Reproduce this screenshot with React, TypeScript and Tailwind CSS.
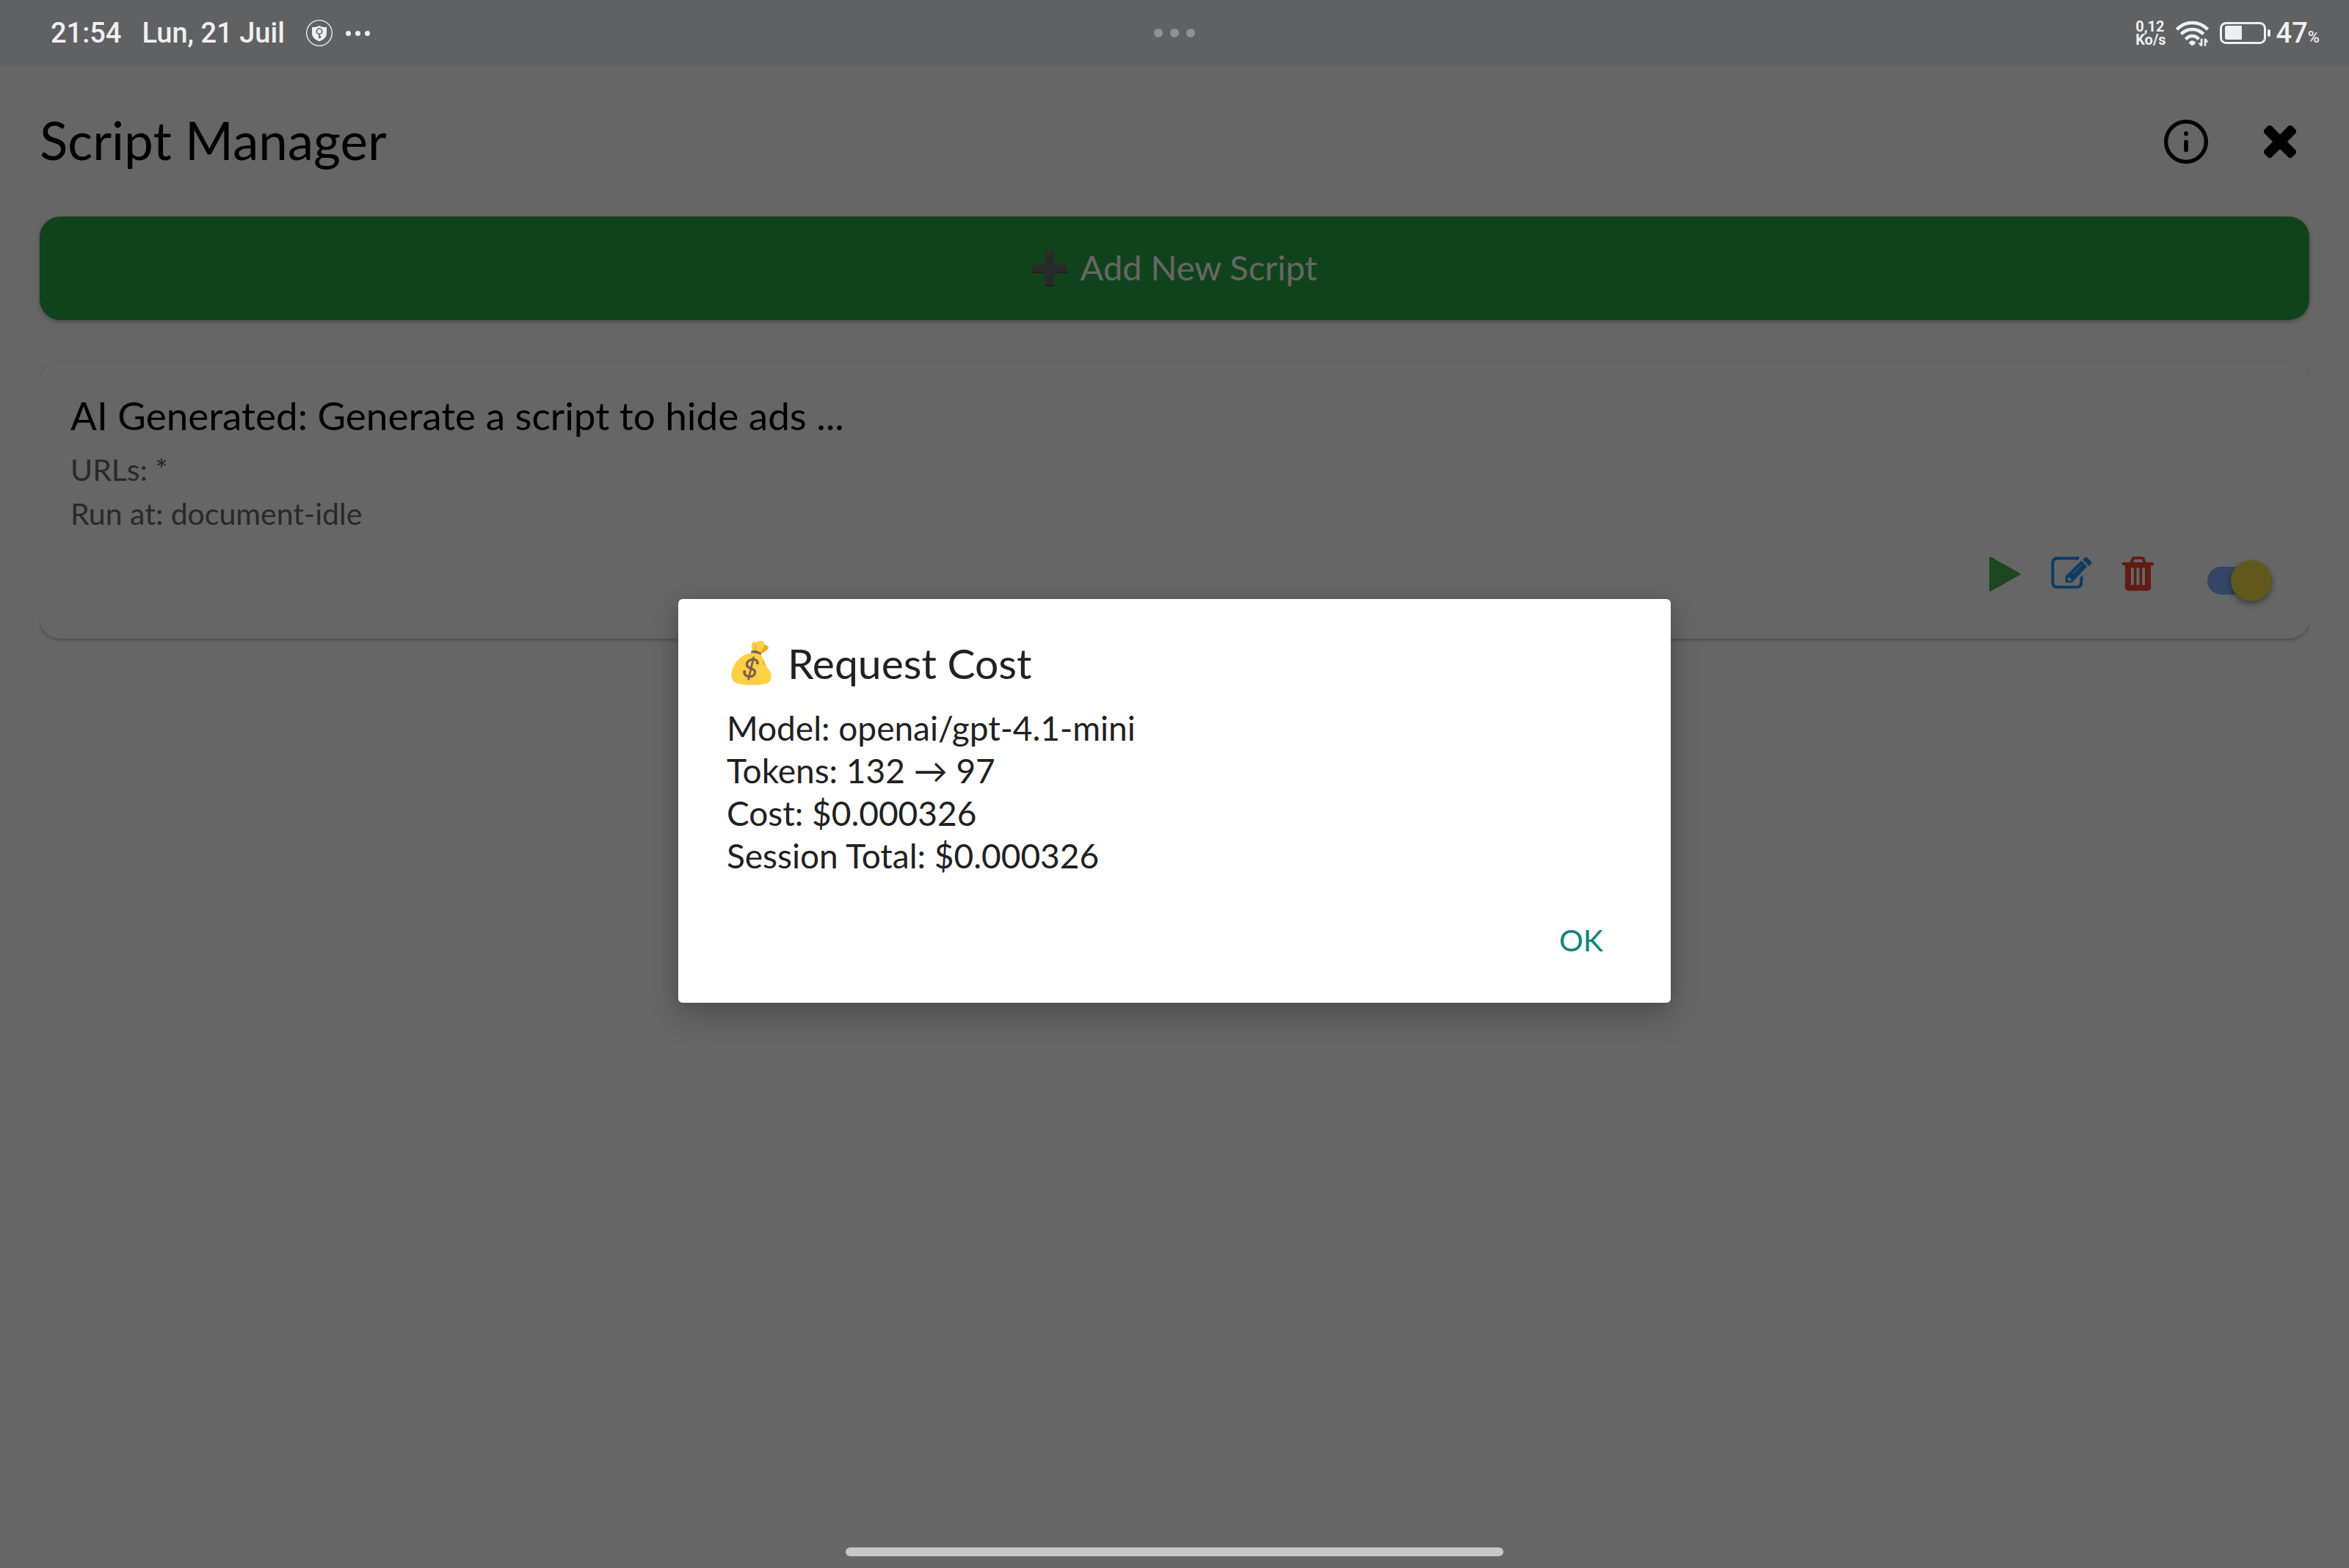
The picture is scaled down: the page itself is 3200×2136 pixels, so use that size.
const scripts = [
  {
    title: "AI Generated: Generate a script to hide ads ...",
    urls: "*",
    runAt: "document-idle",
  },
];

function ShieldIcon() {
  return (
    <svg viewBox="0 0 108 108" className="size-9" aria-hidden="true">
      <circle cx="54" cy="54" r="52" fill="none" stroke="#eef0ef" strokeWidth="4" />
      <path
        d="M54 24c10 6 20 6 30 6v26c0 16-14 25-30 32-16-7-30-16-30-32V30c10 0 20 0 30-6z"
        fill="#eef0ef"
      />
      <circle cx="54" cy="47" r="11" fill="none" stroke="#606163" strokeWidth="5" />
      <path d="M54 58v18M58 66v8" stroke="#606163" strokeWidth="5" />
    </svg>
  );
}

function WifiIcon() {
  return (
    <svg viewBox="307 84 140 106" className="h-[35px] w-[47px]" aria-hidden="true">
      <g fill="none" stroke="#eef0ef" strokeWidth="14">
        <path d="M313 121c36-37 92-37 128 0" />
        <path d="M331 140c26-26 66-26 92 0" />
        <path d="M350 161c15-18 39-18 54 0" />
      </g>
      <path d="M363 176c4-13 24-13 28 0l-8 9c-4 3-8 3-12 0z" fill="#eef0ef" />
      <path
        d="M411 159h8v30h-8l-10-13h10zM426 189v-30h8l10 14h-10v16z"
        fill="#eef0ef"
      />
    </svg>
  );
}

function BatteryIcon() {
  return (
    <svg viewBox="0 0 70 30" className="h-[30px] w-[70px]" aria-hidden="true">
      <rect x="1.5" y="1.5" width="60" height="27" rx="7" fill="none" stroke="#eef0ef" strokeWidth="3" />
      <path d="M10 5h20v19H10a3 3 0 0 1-3-3V8a3 3 0 0 1 3-3z" fill="#eef0ef" />
      <rect x="65" y="10" width="4" height="10" rx="2" fill="#eef0ef" />
    </svg>
  );
}

function InfoIcon() {
  return (
    <svg viewBox="0 0 180 180" className="size-[60px]" aria-hidden="true">
      <circle cx="90" cy="90" r="82" fill="none" stroke="#000" strokeWidth="16" />
      <circle cx="90" cy="57" r="9" />
      <path d="M90 91v33" stroke="#000" strokeWidth="17" strokeLinecap="round" />
    </svg>
  );
}

function CloseIcon() {
  return (
    <svg viewBox="0 0 132 132" className="size-11" aria-hidden="true">
      <g transform="rotate(45 66 66)">
        <rect x="-14" y="45" width="160" height="42" rx="11" />
        <rect x="45" y="-14" width="42" height="160" rx="11" />
      </g>
    </svg>
  );
}

function PlusIcon() {
  return (
    <svg viewBox="0 0 142 144" className="size-12" aria-hidden="true">
      <path d="M54 0h33q2 0 2 2v52h51q2 0 2 2v32q0 2-2 2H89v52q0 2-2 2H54q-2 0-2-2V90H2q-2 0-2-2V56q0-2 2-2h50V2q0-2 2-2z" fill="#66666a" />
      <path d="M52 138h37v6H52zM0 85h52v5H0zM89 85h53v5H89z" fill="#4c4c50" />
      <path d="M56 18q0-13 16-14-4 4-10 7-3 2-6 7zM4 72q0-12 17-13-3 4-10 6-4 2-7 7z" fill="#909096" />
    </svg>
  );
}

function PlayIcon() {
  return (
    <svg viewBox="0 0 43 48" className="h-12 w-[43px]" aria-hidden="true">
      <path d="M0 1Q0 0 2 0.6L42 23q1.600 1 0 2L2 47.600Q0 48 0 47z" fill="#4CAF50" />
    </svg>
  );
}

function EditIcon() {
  return (
    <svg viewBox="44 25 168 134" className="h-[45px] w-[56px]" aria-hidden="true">
      <path
        d="M157 32H72q-21 0-21 21v77q0 20 21 20h76q20 0 20-20v-16"
        fill="none"
        stroke="#2196F3"
        strokeWidth="12"
      />
      <path d="M157 26l4 3-9 10h-6V26zM164 120v-10l10-10v20z" fill="#2196F3" />
      <path d="M103 132v-27l65-63 24 24-63 66z" fill="#2196F3" />
      <path d="M174 37l8-8q5-4 10 0l16 16q4 5 0 10l-9 9z" fill="#2196F3" />
      <path d="M134 94l34-33" stroke="#fff" strokeWidth="3" />
      <path d="M111 117l8-9 3 7 8 3-9 8h-4v-6h-6z" fill="#fff" />
    </svg>
  );
}

function TrashIcon() {
  return (
    <svg viewBox="332 26 130 142" className="h-[47px] w-[43px]" aria-hidden="true">
      <path
        fillRule="evenodd"
        fill="#F44336"
        d="M332 50h32l7-17q3-6 10-6h33q7 0 10 6l7 17h30v12h-11v91q0 14-14 14h-78q-14 0-14-14V62h-12zM376 50h43l-5-10q-1-2-4-2h-25q-3 0-4 2zM371 73q-3 0-3 3v65q0 3 3 3h6q3 0 3-3V76q0-3-3-3zM394 73q-3 0-3 3v65q0 3 3 3h6q3 0 3-3V76q0-3-3-3zM417 73q-3 0-3 3v65q0 3 3 3h6q3 0 3-3V76q0-3-3-3z"
      />
    </svg>
  );
}

function MoneyBagIcon() {
  return (
    <svg viewBox="50 28 165 186" className="h-[62px] w-[55px]" aria-hidden="true">
      <path d="M137 75c-5-15-5-29 0-37 4-5 12-3 16 0 8-7 23-10 29-4 3 4 2 8 3 12 8 2 17 9 18 15-8 9-18 17-31 23z" fill="#FFD044" />
      <path d="M186 46c8 2 16 8 17 15-8 9-18 17-30 22l-5-5c9-9 15-20 18-32zM150 45c-4 9-5 19-4 29l6 1c-2-10-1-20 3-30z" fill="#E8AD2B" />
      <path d="M132 72c13-5 31-2 41 10l-3 11-38-10z" fill="#7D5F52" />
      <path d="M131 81c14-2 31 2 42 9 9 13 13 29 19 43 12 14 24 30 21 50-2 18-18 24-35 26-27 4-62 3-88 0-20-2-38-12-39-36-1-41 36-88 80-92z" fill="#FFD044" />
      <path d="M183 110c-5 9-4 18 6 23l2-3z" fill="#E8AD2B" />
      <path
        d="M158 124c2-12-8-18-20-17-13 1-24 9-24 21 0 20 35 13 34 31-1 12-11 19-24 18-13-1-22-9-20-21"
        fill="none"
        stroke="#7D5F52"
        strokeWidth="10"
      />
      <circle cx="157" cy="122" r="6" fill="#7D5F52" />
      <circle cx="105" cy="157" r="6" fill="#7D5F52" />
      <path d="M142 99l-21 89" stroke="#7D5F52" strokeWidth="8" strokeLinecap="round" />
    </svg>
  );
}

function StatusBar() {
  return (
    <header className="relative z-20 grid h-[90px] grid-cols-[1fr_auto_1fr] items-center bg-[#606163] px-10 font-['Roboto',sans-serif] text-[38px] leading-none font-medium text-[#eef0ef]">
      <div className="flex items-center pl-[29px]">
        <time>21:54</time>
        <span className="ml-[28px]">Lun, 21 Juil</span>
        <span className="ml-[29px]">
          <ShieldIcon />
        </span>
        <span className="ml-[18px] flex gap-[6px]">
          <i className="size-[7px] rounded-full bg-[#eef0ef]" />
          <i className="size-[7px] rounded-full bg-[#eef0ef]" />
          <i className="size-[7px] rounded-full bg-[#eef0ef]" />
        </span>
      </div>
      <div className="flex gap-[10px]">
        <i className="size-3 rounded-full bg-[#909291]" />
        <i className="size-3 rounded-full bg-[#909291]" />
        <i className="size-3 rounded-full bg-[#909291]" />
      </div>
      <div className="flex items-center justify-end">
        <div className="text-[20px] leading-[18px] font-bold">
          <div>0,12</div>
          <div>Ko/s</div>
        </div>
        <span className="ml-3">
          <WifiIcon />
        </span>
        <span className="ml-[14px]">
          <BatteryIcon />
        </span>
        <span className="ml-[7px] flex items-baseline">
          47<span className="text-[22px]">%</span>
        </span>
      </div>
    </header>
  );
}

function ScriptCard({ title, urls, runAt }: { title: string; urls: string; runAt: string }) {
  return (
    <li className="rounded-[28px] bg-white p-[42px] shadow-[0_2px_5px_rgba(0,0,0,0.28)]">
      <h2 className="text-[53px] leading-[64px]">{title}</h2>
      <div className="mt-3 text-[41px] leading-[60px] text-[#666]">
        <p>URLs: {urls}</p>
        <p>Run at: {runAt}</p>
      </div>
      <div className="mt-7 flex h-[70px] items-start justify-end pr-[9px]">
        <button type="button" aria-label="Run script">
          <PlayIcon />
        </button>
        <button type="button" aria-label="Edit script" className="ml-[41px]">
          <EditIcon />
        </button>
        <button type="button" aria-label="Delete script" className="ml-[41px]">
          <TrashIcon />
        </button>
        <input
          type="checkbox"
          defaultChecked
          aria-label="Script enabled"
          className="relative mt-[14px] ml-[73px] h-[38px] w-[88px] appearance-none rounded-full bg-[#81b0ff] before:absolute before:-top-[9px] before:right-0 before:size-14 before:rounded-full before:bg-[#f5dd4b] before:shadow-[0_4px_8px_rgba(0,0,0,0.4)]"
        />
      </div>
    </li>
  );
}

function CostDialog() {
  return (
    <div className="absolute inset-0 z-10 grid place-items-center bg-black/60 pt-[46px]">
      <section
        role="dialog"
        aria-labelledby="cost-title"
        className="w-full max-w-[1352px] rounded-md bg-white px-[66px] pt-[53px] pb-11 text-[#212121] shadow-[0_20px_44px_rgba(0,0,0,0.2),0_0_24px_rgba(0,0,0,0.1)]"
      >
        <h2 id="cost-title" className="flex items-center gap-[22px] pl-[6px] text-[57px] leading-[68px]">
          <MoneyBagIcon />
          Request Cost
        </h2>
        <div className="mt-[26px] text-[46px] leading-[58px]">
          <p>Model: openai/gpt-4.1-mini</p>
          <p>Tokens: 132 → 97</p>
          <p>Cost: $0.000326</p>
          <p>Session Total: $0.000326</p>
        </div>
        <div className="mt-[45px] flex justify-end">
          <button type="button" className="px-[26px] py-4 text-[41px] leading-[50px] text-[#128577]">
            OK
          </button>
        </div>
      </section>
    </div>
  );
}

export default function App() {
  return (
    <div className="relative flex min-h-screen flex-col bg-white font-['Lato','DejaVu_Sans',sans-serif] text-black">
      <StatusBar />
      <main className="flex-1 px-[54px]">
        <div className="flex items-center justify-between pt-[59px] pr-[18px] pb-[62px]">
          <h1 className="text-[71px] leading-[84px]">Script Manager</h1>
          <div className="flex items-center gap-[76px] pt-1">
            <button type="button" aria-label="About">
              <InfoIcon />
            </button>
            <button type="button" aria-label="Close">
              <CloseIcon />
            </button>
          </div>
        </div>
        <button
          type="button"
          className="flex h-[141px] w-full items-center justify-center gap-[18px] rounded-[28px] bg-[#28a745] text-[47px] text-white shadow-[0_2px_6px_rgba(0,0,0,0.3)]"
        >
          <PlusIcon />
          <span className="pb-0.5">Add New Script</span>
        </button>
        <ul className="mt-14 overflow-x-clip">
          {scripts.map((script) => (
            <ScriptCard key={script.title} {...script} />
          ))}
        </ul>
      </main>
      <CostDialog />
      <footer className="relative z-20 flex justify-center pb-4">
        <div className="h-3 w-[28%] rounded-full bg-[#c8c8c8]" />
      </footer>
    </div>
  );
}
